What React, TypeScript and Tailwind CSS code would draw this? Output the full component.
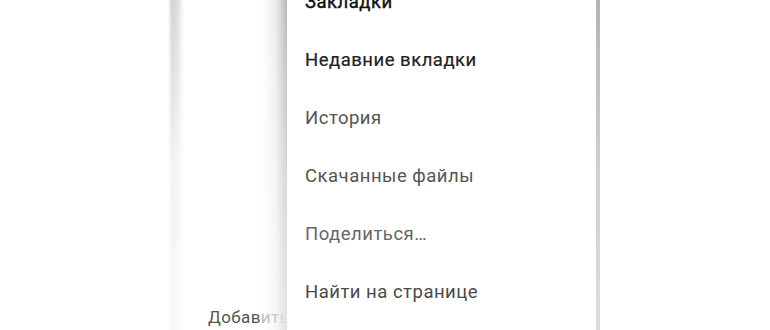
import React from "react";

const items: { label: string; cls: string }[] = [
  { label: "Закладки", cls: "text-[#111111] [-webkit-text-stroke:0.4px_#111111]" },
  { label: "Недавние вкладки", cls: "text-[#222222] [-webkit-text-stroke:0.2px_#222222]" },
  { label: "История", cls: "text-[#555555]" },
  { label: "Скачанные файлы", cls: "text-[#555555]" },
  { label: "Поделиться…", cls: "text-[#666666]" },
  { label: "Найти на странице", cls: "text-[#4a4a4a]" },
];

export default function App() {
  return (
    <div
      className="relative w-[770px] h-[330px] overflow-hidden bg-white"
      style={{ fontFamily: "Roboto, 'Noto Sans', sans-serif" }}
    >
      {/* background page */}
      <div className="flex h-full">
        <div className="w-[168px] shrink-0" />
        <div className="relative w-[16px] shrink-0 bg-[linear-gradient(to_right,#ffffff,#d2d2d2_25%,#dedede_60%,#ffffff)]">
          <div className="absolute inset-0 bg-gradient-to-b from-transparent via-white/70 to-white/85" />
        </div>
        <div className="flex-1 flex flex-col justify-end">
          <div className="pl-[24px] pb-[3px] text-[17px] leading-[20px] text-[#555555] tracking-[0.4px]">
            Добавить
          </div>
        </div>
      </div>

      {/* overflow menu */}
      <div className="absolute top-0 left-[262px] h-full flex">
        <div className="relative w-[25px] h-full bg-[linear-gradient(to_right,rgba(255,255,255,0),rgba(200,200,200,0.35)_55%,#b8b8b8)]">
          <div className="absolute inset-0 bg-gradient-to-b from-transparent via-white/40 to-white/60" />
        </div>
        <div className="w-[309px] h-full bg-white">
          <div className="-mt-[26px] flex flex-col pl-[18px]">
            {items.map((it) => (
              <div
                key={it.label}
                className={`h-[58px] flex items-center text-[18.5px] tracking-[0.5px] font-normal ${it.cls}`}
              >
                {it.label}
              </div>
            ))}
          </div>
        </div>
        <div className="w-[4px] h-full bg-gradient-to-b from-[#b4b4b4] via-[#cfcfcf] to-[#dddddd]" />
      </div>
    </div>
  );
}
